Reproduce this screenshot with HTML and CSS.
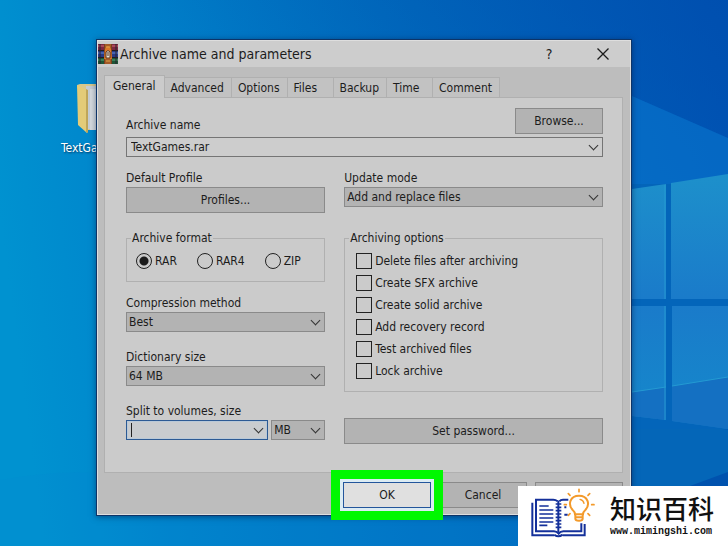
FILE: index.html
```
<!DOCTYPE html>
<html lang="en">
<head>
    <meta charset="UTF-8">
    <meta name="viewport" content="width=device-width, initial-scale=1.0">
    <title>Archive name and parameters</title>
    <link rel="stylesheet" href="styles.css">
</head>
<body>
    <div class="desktop">
        <svg class="wallpaper" viewBox="0 0 728 546" preserveAspectRatio="none" aria-hidden="true">
            <defs>
                <linearGradient id="sky" x1="0" y1="0.4" x2="1" y2="0.3">
                    <stop offset="0" stop-color="#0092d0"/>
                    <stop offset="0.2" stop-color="#0083cb"/>
                    <stop offset="0.6" stop-color="#0070c2"/>
                    <stop offset="1" stop-color="#0060c0"/>
                </linearGradient>
                <linearGradient id="corner" x1="0.4" y1="0.4" x2="1" y2="0">
                    <stop offset="0" stop-color="#0044a4" stop-opacity="0"/>
                    <stop offset="1" stop-color="#0044a4" stop-opacity="0.6"/>
                </linearGradient>
                <linearGradient id="pane" x1="0" y1="0" x2="0" y2="1">
                    <stop offset="0" stop-color="#1d90cb"/>
                    <stop offset="1" stop-color="#1a7bca"/>
                </linearGradient>
                <linearGradient id="pane-low" x1="0" y1="0" x2="0" y2="1">
                    <stop offset="0" stop-color="#1a7bca"/>
                    <stop offset="0.7" stop-color="#1685cb"/>
                    <stop offset="1" stop-color="#1577c4"/>
                </linearGradient>
            </defs>
            <rect width="728" height="546" fill="url(#sky)"/>
            <rect width="728" height="546" fill="url(#corner)"/>
            <path d="M270 0Q330 24 400 39H632V96L728 138V180L632 190V430L728 470V546H0V480Q60 470 96 473V39H400Q330 24 270 0Z" fill="#0a86d4" opacity="0.12"/>
            <path d="M632 96L728 138V176L632 190Z" fill="#0a78d0" opacity="0.5"/>
            <path d="M632 412L728 430V486H632Z" fill="#0466b8"/>
            <path d="M690 486L728 472V486Z" fill="#0052ae"/>
            <path d="M632 184H728V429H632Z" fill="#0365ba"/>
            <path d="M632 189L666 184V299H632ZM671 183L728 174V299H671Z" fill="url(#pane)"/>
            <path d="M632 306H666V420L632 416ZM672 306H728V429L672 421Z" fill="url(#pane-low)"/>
            <path d="M632 392L666 387V420L632 416ZM672 386L728 377V429L672 421Z" fill="#1470c2"/>
            <path d="M632 392L666 387M672 386L728 377M665 185V299M665 306V420" fill="none" stroke="#249ad2"/>
        </svg>

        <div class="desktop-icon">
            <svg width="44" height="50" viewBox="0 0 44 50" aria-hidden="true">
                <path d="M0 1L3 0H40V46H10Z" fill="#d8c88c"/>
                <path d="M9 2H44V45H9Z" fill="#c4ccd4"/>
                <path d="M13 5H44V46H13Z" fill="#d5dade"/>
                <path d="M0 1L10 6V49L1 41Z" fill="#e3cb78"/>
                <path d="M9 5L11 6V49L9 48Z" fill="#bfa65a"/>
            </svg>
            <span>TextGames</span>
        </div>

        <div class="window">
            <div class="title-bar">
                <svg class="app-icon" width="20" height="20" viewBox="0 0 20 20" aria-hidden="true">
                    <rect width="20" height="6" fill="#7c2743"/>
                    <rect y="1" width="20" height="2" fill="#a8485a"/>
                    <rect y="7" width="20" height="6" fill="#263a86"/>
                    <rect y="8" width="20" height="2" fill="#4663ae"/>
                    <rect y="14" width="20" height="6" fill="#1e5638"/>
                    <rect y="15" width="20" height="2" fill="#398058"/>
                    <path d="M0 6.5H20M0 13.5H20" stroke="#201c22"/>
                    <path d="M2 0V20M18 0V20" stroke="#28222a"/>
                    <rect x="6" width="8" height="20" fill="#79401d"/>
                    <rect x="7" width="6" height="20" fill="#a45a28"/>
                    <path d="M6 15L7 5Q10 -1 13 5L14 15Z" fill="#d9772a"/>
                    <path d="M8 8Q10 5 12 8V14H8Z" fill="#ece4d4" stroke="#55331d"/>
                    <path d="M10 8V12" stroke="#55331d"/>
                    <path d="M8 3H12M8 17H12" stroke="#e0a548"/>
                </svg>
                <h1>Archive name and parameters</h1>
                <button type="button" class="title-btn" aria-label="Help">?</button>
                <button type="button" class="title-btn" aria-label="Close">
                    <svg width="12" height="12" viewBox="0 0 12 12"><path d="M0.500 0.500L11.500 11.500M11.500 0.500L0.500 11.500" stroke="#1c1c1c" stroke-width="1.300"/></svg>
                </button>
            </div>

            <form class="dialog">
                <div class="tabs" role="tablist">
                    <button type="button" class="tab active" role="tab">General</button>
                    <button type="button" class="tab" role="tab">Advanced</button>
                    <button type="button" class="tab" role="tab">Options</button>
                    <button type="button" class="tab" role="tab">Files</button>
                    <button type="button" class="tab" role="tab">Backup</button>
                    <button type="button" class="tab" role="tab">Time</button>
                    <button type="button" class="tab" role="tab">Comment</button>
                </div>

                <div class="panel">
                    <div class="name-row">
                        <label for="archive-name">Archive name</label>
                        <button type="button" class="btn browse">Browse...</button>
                    </div>
                    <div class="drop name-box">
                        <input type="text" id="archive-name" value="TextGames.rar">
                    </div>

                    <div class="columns">
                        <div class="column">
                            <div class="field">
                                <label for="profiles">Default Profile</label>
                                <button type="button" class="btn" id="profiles">Profiles...</button>
                            </div>
                            <fieldset>
                                <legend>Archive format</legend>
                                <div class="radios">
                                    <label class="option"><input type="radio" name="format" checked> RAR</label>
                                    <label class="option"><input type="radio" name="format"> RAR4</label>
                                    <label class="option"><input type="radio" name="format"> ZIP</label>
                                </div>
                            </fieldset>
                            <div class="field">
                                <label for="method">Compression method</label>
                                <div class="drop"><select id="method"><option>Best</option></select></div>
                            </div>
                            <div class="field">
                                <label for="dictionary">Dictionary size</label>
                                <div class="drop"><select id="dictionary"><option>64 MB</option></select></div>
                            </div>
                            <div class="field">
                                <label for="volume">Split to volumes, size</label>
                                <div class="volume-row">
                                    <div class="drop volume-size"><input type="text" id="volume" class="focused"></div>
                                    <div class="drop volume-unit"><select aria-label="Unit"><option>MB</option></select></div>
                                </div>
                            </div>
                        </div>

                        <div class="column">
                            <div class="field">
                                <label for="update">Update mode</label>
                                <div class="drop"><select id="update"><option>Add and replace files</option></select></div>
                            </div>
                            <fieldset class="archiving">
                                <legend>Archiving options</legend>
                                <div class="checks">
                                    <label class="option"><input type="checkbox"> Delete files after archiving</label>
                                    <label class="option"><input type="checkbox"> Create SFX archive</label>
                                    <label class="option"><input type="checkbox"> Create solid archive</label>
                                    <label class="option"><input type="checkbox"> Add recovery record</label>
                                    <label class="option"><input type="checkbox"> Test archived files</label>
                                    <label class="option"><input type="checkbox"> Lock archive</label>
                                </div>
                            </fieldset>
                            <button type="button" class="btn password">Set password...</button>
                        </div>
                    </div>
                </div>

                <div class="actions">
                    <button type="button" class="btn ok">OK</button>
                    <button type="button" class="btn">Cancel</button>
                    <button type="button" class="btn">Help</button>
                </div>
            </form>
        </div>

        <div class="brand">
            <svg width="67" height="52" viewBox="60 258 201 156" fill="none" aria-hidden="true">
                <g stroke="#14309a" stroke-width="6">
                    <path d="M67 308V406H133M158 406H224V372"/>
                    <path d="M143 304Q137 299 130 299H78V394H132Q140 394 146 401Q151 394 160 394H214V370"/>
                    <path d="M133 404Q145 414 158 404"/>
                    <path d="M148 304Q152 299 159 299H175M163 322H169M163 344H173"/>
                    <path d="M88 318H116M88 330H130M88 342H130M88 354H130M88 366H130M88 376H112" stroke-width="5"/>
                    <path d="M145 302V398" stroke-width="6"/>
                    <path d="M137 312H154M137 322H154M137 332H154M137 342H154M137 352H154M137 362H154M137 372H154M137 382H154" stroke-width="5"/>
                </g>
                <g stroke="#f39a2b" stroke-width="6" stroke-linecap="round">
                    <path d="M195 343Q195 336 188 330C172 312 181 287 207 287C233 287 242 312 226 330Q219 336 219 343Z" fill="#fff"/>
                    <path d="M196 344V356Q196 362 207 362Q218 362 218 356V344M197 352H217"/>
                    <path d="M210 298Q220 300 222 310" stroke-width="4"/>
                    <path d="M207 268V275M175 281L180 286M239 281L234 286M163 314H169M245 314H252M175 346L180 341M239 346L234 341" stroke-width="5"/>
                </g>
            </svg>
            <div class="brand-text">
                <strong lang="zh">知识百科</strong>
                <span>www.mimingshi.com</span>
            </div>
        </div>
    </div>
</body>
</html>
```
FILE: styles.css
```
* {
    box-sizing: border-box;
}
body {
    margin: 0;
    font-family: "DejaVu Sans Condensed", "DejaVu Sans", sans-serif;
    font-size: 12px;
    line-height: 17px;
    color: #1c1c1c;
}
button, input, select {
    font: inherit;
    color: inherit;
    margin: 0;
}
.desktop {
    position: relative;
    min-height: 100vh;
    padding: 39px 96px 30px;
    background: #0078c8;
    overflow: hidden;
}
.wallpaper {
    position: absolute;
    inset: 0;
    width: 100%;
    height: 100%;
}
.desktop-icon {
    position: absolute;
    left: 61px;
    top: 84px;
    display: flex;
    flex-direction: column;
    gap: 6px;
    color: #fff;
    text-shadow: 1px 1px 2px #00345c;
}
.desktop-icon svg {
    margin-left: 16px;
}

/* window */
.window {
    position: relative;
    max-width: 800px;
    margin: 0 auto;
    background: #bdbdbd;
    border: 1px solid #0d3468;
    box-shadow: inset 0 0 0 1px #dedede, 0 1px 6px rgba(0, 20, 60, 0.5);
    padding: 1px;
}
.title-bar {
    display: flex;
    align-items: center;
    height: 26px;
    background: #cdcdcd;
}
.title-bar h1 {
    flex: 1;
    margin: 0 0 0 2px;
    font-size: 14px;
    font-weight: normal;
}
.title-btn {
    width: 54px;
    height: 26px;
    padding: 0;
    border: 0;
    background: none;
    font-size: 14px;
}
.title-btn svg {
    display: block;
    margin: auto;
}

/* tabs */
.dialog {
    padding: 8px 7px 6px 6px;
}
.tabs {
    display: flex;
    align-items: flex-end;
}
.tab {
    height: 20px;
    min-width: 46px;
    padding: 2px 7px 0 6px;
    border: 1px solid #b0b0b0;
    border-width: 1px 1px 0 0;
    background: #c2c2c2;
    text-align: left;
}
.tab.active {
    position: relative;
    height: 23px;
    margin-bottom: -1px;
    padding: 0 8px 2px;
    border-width: 1px 1px 0 1px;
    background: #cbcbcb;
}
.panel {
    padding: 10px 19px 28px 21px;
    border: 1px solid #b0b0b0;
    background: #cbcbcb;
}

/* controls */
.btn {
    height: 26px;
    padding: 0 8px;
    border: 1px solid #8a8a8a;
    background: #b3b3b3;
}
.name-row {
    display: flex;
    align-items: flex-end;
    justify-content: space-between;
    margin-bottom: 3px;
}
.browse {
    min-width: 88px;
}
.drop {
    position: relative;
}
.drop::after {
    content: "";
    position: absolute;
    right: 6px;
    top: 5px;
    width: 6px;
    height: 6px;
    border: solid #333;
    border-width: 0 1px 1px 0;
    transform: rotate(45deg);
    pointer-events: none;
}
.drop input, .drop select {
    display: block;
    appearance: none;
    width: 100%;
    height: 20px;
    padding: 0 20px 0 2px;
    border: 1px solid #8a8a8a;
    border-radius: 0;
    background: #b3b3b3;
    outline: 0;
}
.drop input {
    padding-left: 4px;
    border-color: #757575;
    background: #cdcdcd;
}
.drop .focused {
    border-color: #2c5a94;
    box-shadow: inset 0 0 0 1px #b9c9d8;
    background: linear-gradient(#222, #222) 4px center / 1px 14px no-repeat #c9cccf;
}
.columns {
    display: grid;
    grid-template-columns: minmax(0, 10fr) minmax(0, 13fr);
    gap: 19px;
    margin-top: 13px;
}
.field {
    display: flex;
    flex-direction: column;
    margin-bottom: 17px;
}
.field:last-child {
    margin-bottom: 0;
}
fieldset {
    min-width: 0;
    margin: 0 0 13px;
    padding: 3px 4px 9px;
    border: 1px solid #b0b0b0;
}
legend {
    padding: 0 1px;
}
.archiving {
    margin: 23px 0 26px;
}
.radios {
    display: flex;
    gap: 20px;
    padding-left: 5px;
}
.checks {
    padding-left: 7px;
}
.option {
    display: flex;
    align-items: center;
    gap: 3px;
    height: 22px;
}
.option input {
    appearance: none;
    width: 16px;
    height: 16px;
    border: 1px solid #222;
}
.option input[type="radio"] {
    border-radius: 50%;
}
.option input[type="radio"]:checked {
    background: radial-gradient(circle, #1c1c1c 4px, transparent 5px);
}
.volume-row {
    display: grid;
    grid-template-columns: minmax(0, 1fr) 54px;
    gap: 3px;
}
.password {
    width: 100%;
}

/* bottom buttons */
.actions {
    display: flex;
    justify-content: flex-end;
    gap: 8px;
    padding-top: 9px;
}
.actions .btn {
    width: 88px;
}
.actions .ok {
    position: relative;
    border-color: #24569c;
    background: #e0e0e0;
    outline: 9px solid #00f800;
    outline-offset: 3px;
    box-shadow: 0 0 0 3px #dcecf4;
}

/* site badge */
.brand {
    position: absolute;
    right: 0;
    bottom: 0;
    display: flex;
    align-items: flex-start;
    gap: 13px;
    height: 60px;
    padding: 0 14px 0 12px;
    background: #fff;
    color: #111;
}
.brand-text {
    display: flex;
    flex-direction: column;
    padding-top: 4px;
}
.brand-text strong {
    font: 500 26px/36px "Noto Sans CJK SC", sans-serif;
}
.brand-text span {
    font: bold 10px/12px "Liberation Mono", monospace;
}
```
